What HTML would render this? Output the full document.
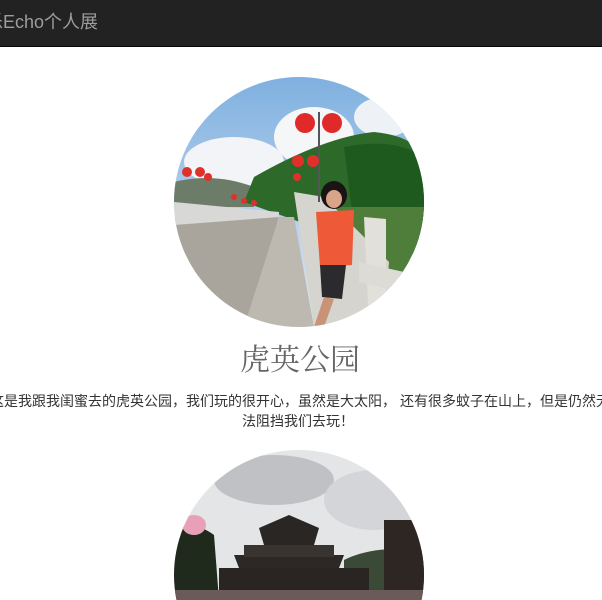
<!DOCTYPE html>
<html><head><meta charset="utf-8"><style>
html,body{margin:0;padding:0;width:602px;height:600px;overflow:hidden;background:#fff;font-family:"Liberation Sans","Noto Sans CJK SC",sans-serif}
.nav{position:absolute;left:0;top:0;width:602px;height:46px;background:#222;border-bottom:1px solid #080808}
.brand{position:absolute;left:-15px;top:12px;font-size:18px;color:#9d9d9d;white-space:nowrap;line-height:20px}
h1{position:absolute;left:-1px;width:602px;top:342px;margin:0;text-align:center;font-family:"Liberation Serif","Noto Serif CJK SC",serif;font-weight:normal;font-size:30px;color:#666;line-height:38px}
.t{position:absolute;font-size:14px;color:#333;line-height:20px;white-space:nowrap}
svg{position:absolute}
</style></head><body>
<div class="nav"><div class="brand">乐Echo个人展</div></div>
<svg style="left:174px;top:77px" width="250" height="250" viewBox="0 0 250 250">
<defs><clipPath id="c1"><circle cx="125" cy="125" r="125"/></clipPath>
<linearGradient id="sky" x1="0" y1="0" x2="0" y2="1"><stop offset="0" stop-color="#7fb0e0"/><stop offset="1" stop-color="#dfeaf4"/></linearGradient></defs>
<g clip-path="url(#c1)">
<rect width="250" height="250" fill="url(#sky)"/>
<ellipse cx="60" cy="85" rx="50" ry="25" fill="#f2f4f7"/>
<ellipse cx="140" cy="60" rx="40" ry="30" fill="#f4f6f8"/>
<ellipse cx="210" cy="40" rx="30" ry="20" fill="#eef2f6"/>
<path d="M0 105 Q40 95 80 110 L80 130 L0 130Z" fill="#6c7c68"/>
<path d="M80 100 Q150 60 200 55 Q250 60 250 90 L250 180 L140 150 L70 125Z" fill="#2d6a2a"/>
<path d="M170 70 Q220 60 250 80 L250 170 L180 150Z" fill="#1e5a1e"/>
<rect x="155" y="130" width="95" height="70" fill="#4f7e3a"/>
<path d="M0 140 L105 138 L80 250 L0 250Z" fill="#a9a59c"/>
<path d="M0 125 L105 135 L105 140 L0 148Z" fill="#d8d8d6"/>
<path d="M105 140 L120 140 L140 250 L70 250Z" fill="#bdb9b0"/>
<path d="M120 115 L150 120 L215 185 L210 250 L140 250Z" fill="#d6d4ce"/>
<path d="M190 140 L212 142 L212 250 L195 250Z" fill="#e2e0da"/>
<path d="M185 185 L230 195 L225 215 L185 205Z" fill="#dddbd5"/>
<circle cx="131" cy="46" r="10" fill="#e02a2a"/><circle cx="158" cy="46" r="10" fill="#e02a2a"/>
<rect x="144" y="35" width="2" height="90" fill="#555"/>
<circle cx="124" cy="84" r="6" fill="#e0302a"/><circle cx="139" cy="84" r="6" fill="#e0302a"/>
<circle cx="123" cy="100" r="4" fill="#e0302a"/><circle cx="13" cy="95" r="5" fill="#e0302a"/><circle cx="26" cy="95" r="5" fill="#e0302a"/><circle cx="34" cy="100" r="4" fill="#e0302a"/>
<circle cx="60" cy="120" r="3" fill="#e0302a"/><circle cx="70" cy="124" r="3" fill="#e0302a"/><circle cx="80" cy="126" r="3" fill="#e0302a"/>
<ellipse cx="160" cy="118" rx="13" ry="14" fill="#1a1414"/>
<ellipse cx="160" cy="122" rx="8" ry="9" fill="#d8a58a"/>
<path d="M142 135 L180 133 L178 188 L146 190Z" fill="#ee5a38"/>
<path d="M146 188 L172 188 L168 222 L148 220Z" fill="#2b2b2e"/>
<path d="M150 220 L160 222 L150 250 L140 250Z" fill="#c89478"/>
</g></svg>
<h1>虎英公园</h1>
<div class="t" style="left:-10px;top:391px">这是我跟我闺蜜去的虎英公园，我们玩的很开心，虽然是大太阳，</div>
<div class="t" style="left:400px;top:391px">还有很多蚊子在山上，但是仍然无</div>
<div class="t" style="left:242px;top:411px">法阻挡我们去玩！</div>
<svg style="left:174px;top:450px" width="250" height="150" viewBox="0 0 250 150">
<defs><clipPath id="c2"><circle cx="125" cy="125" r="125"/></clipPath></defs>
<g clip-path="url(#c2)">
<rect width="250" height="150" fill="#e4e5e7"/>
<ellipse cx="100" cy="30" rx="60" ry="25" fill="#bfc1c4"/>
<ellipse cx="200" cy="50" rx="50" ry="30" fill="#d3d5d8"/>
<path d="M0 80 Q20 70 40 85 L45 150 L0 150Z" fill="#1f2a1c"/>
<path d="M170 110 Q200 95 250 100 L250 150 L170 150Z" fill="#3b4a36"/>
<path d="M85 78 L115 65 L145 78 L140 95 L90 95Z" fill="#2a2624"/>
<path d="M60 105 L170 105 L165 118 L65 118Z" fill="#2c2826"/>
<rect x="70" y="95" width="90" height="12" fill="#3a3430"/>
<rect x="45" y="118" width="150" height="32" fill="#2a2422"/>
<rect x="210" y="70" width="40" height="80" fill="#2d2622"/>
<ellipse cx="20" cy="75" rx="12" ry="10" fill="#e8a0b8"/>
<rect x="0" y="140" width="250" height="10" fill="#6a5a5a"/>
</g></svg>
</body></html>
